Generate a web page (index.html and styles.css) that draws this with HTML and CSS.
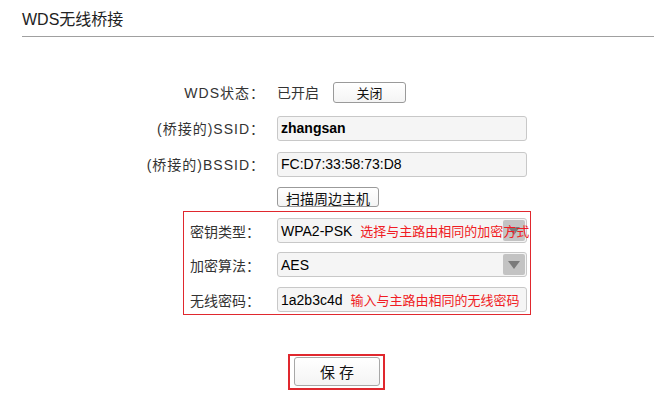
FILE: index.html
```html
<!DOCTYPE html>
<html>
<head>
  <title>WDS无线桥接</title>
  <link rel="stylesheet" href="styles.css">
</head>
<body>
  <div class="title">WDS无线桥接</div>

  <div class="form">
    <div class="row">
      <span class="label">WDS状态：</span>
      <span class="status">已开启</span>
      <button class="btn btn-close">关闭</button>
    </div>
    <div class="row">
      <span class="label">(桥接的)SSID：</span>
      <div class="field bold">zhangsan</div>
    </div>
    <div class="row">
      <span class="label">(桥接的)BSSID：</span>
      <div class="field">FC:D7:33:58:73:D8</div>
    </div>
    <div class="row row-scan">
      <span class="label"></span>
      <button class="btn btn-scan">扫描周边主机</button>
    </div>

    <div class="secure">
      <div class="srow">
        <span class="slabel">密钥类型：</span>
        <div class="field select">
          <span class="arrow"></span>
          WPA2-PSK<span class="hint">选择与主路由相同的加密方式</span>
        </div>
      </div>
      <div class="srow">
        <span class="slabel">加密算法：</span>
        <div class="field select">
          <span class="arrow"></span>
          AES
        </div>
      </div>
      <div class="srow">
        <span class="slabel">无线密码：</span>
        <div class="field">1a2b3c4d<span class="hint">输入与主路由相同的无线密码</span></div>
      </div>
    </div>

    <div class="save-wrap">
      <button class="btn btn-save">保 存</button>
    </div>
  </div>
</body>
</html>
```

FILE: styles.css
```css
body {
  margin: 0;
  font-family: "Liberation Sans", "Noto Sans CJK SC", sans-serif;
  color: #333;
  background: #fff;
}

.title {
  margin: 0 10px 0 22px;
  padding-top: 4px;
  height: 32px;
  line-height: 32px;
  font-size: 16px;
  color: #222;
  border-bottom: 1px solid #a0a0a0;
}

.form {
  margin: 37px 0 0 137px;
  font-size: 14px;
}

.row {
  display: flex;
  align-items: center;
  height: 36px;
}

.row-scan {
  height: 29px;
}

.label {
  width: 128px;
  padding-right: 12px;
  text-align: right;
  letter-spacing: 1px;
  flex-shrink: 0;
}

.status {
  color: #333;
}

.btn {
  font-family: "Liberation Sans", "Noto Sans CJK SC", sans-serif;
  font-size: 13px;
  color: #111;
  background: linear-gradient(#fff, #f4f4f4);
  border: 1px solid #9a9a9a;
  border-radius: 3px;
  padding: 0;
  cursor: pointer;
}

.btn-close {
  margin-left: 14px;
  width: 73px;
  height: 21px;
}

.btn-scan {
  width: 102px;
  height: 20px;
  font-size: 14px;
}

.field {
  position: relative;
  display: flex;
  align-items: center;
  box-sizing: border-box;
  width: 250px;
  height: 25px;
  padding-left: 3px;
  border: 1px solid #c8c8c8;
  border-radius: 3px;
  background: #f5f5f5;
  color: #000;
  font-size: 14px;
  white-space: nowrap;
}

.bold {
  font-weight: bold;
}

.secure {
  box-sizing: border-box;
  width: 348px;
  margin-left: 46px;
  padding: 6px 0 2px 6px;
  border: 1px solid #e0282e;
}

.srow {
  display: flex;
  align-items: center;
  margin-bottom: 9px;
}

.srow:last-child {
  margin-bottom: 0;
}

.srow:nth-child(2) {
  margin-bottom: 10px;
}

.slabel {
  width: 87px;
  flex-shrink: 0;
}

.hint {
  position: relative;
  z-index: 1;
  margin-left: 8px;
  font-size: 13px;
  color: #f01c24;
}

.arrow {
  position: absolute;
  top: 1px;
  right: 1px;
  width: 22px;
  height: 21px;
  border-radius: 2px;
  background: #c3c3c3;
}

.arrow::after {
  content: "";
  position: absolute;
  left: 5px;
  top: 7px;
  border-left: 6px solid transparent;
  border-right: 6px solid transparent;
  border-top: 8px solid #7b7b7b;
}

.save-wrap {
  box-sizing: border-box;
  width: 97px;
  height: 36px;
  margin: 39px 0 0 151px;
  padding: 1px 3px 2px 4px;
  border: 2px solid #e0282e;
}

.btn-save {
  width: 86px;
  height: 29px;
  font-size: 15px;
  border-color: #a8a8a8;
}
```
